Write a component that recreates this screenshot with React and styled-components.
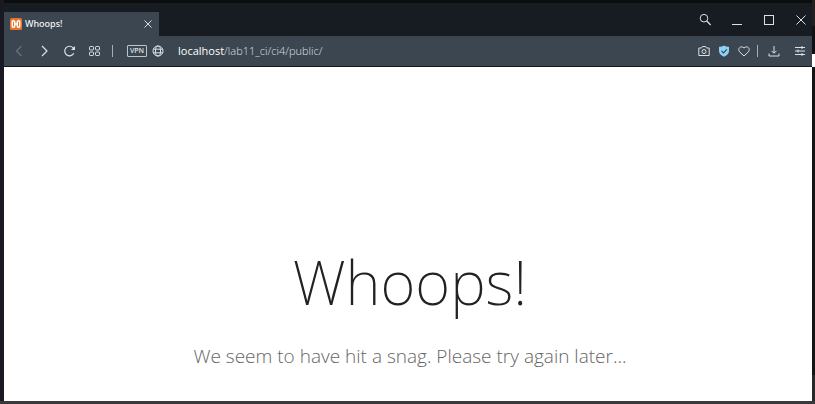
import React from 'react';
import styled, { createGlobalStyle } from 'styled-components';

const GlobalStyle = createGlobalStyle`
  * { box-sizing: border-box; }
  body { margin: 0; background: #16191f; font-family: "Open Sans", "Noto Sans", sans-serif; }
  button, input { font: inherit; color: inherit; border: 0; padding: 0; background: none; }
`;

const Desktop = styled.div`
  min-height: 100vh;
  display: grid;
  grid-template-columns: 4px minmax(0, 1fr) 3px;
  grid-template-rows: 1fr 3px;
  background: #16191f;
`;

const LeftEdge = styled.div`
  background: #181922;
`;

const RightEdge = styled.div`
  background: linear-gradient(#24201f 0 26px, #111114 26px 54px, #ffffff 54px 67px, #141415 67px 375px, #29292b 375px);
`;

const BottomEdge = styled.div`
  grid-column: 1 / -1;
  background: #39393b;
`;

const Browser = styled.div`
  display: flex;
  flex-direction: column;
`;

const TitleBar = styled.header`
  height: 36px;
  display: flex;
  align-items: flex-end;
  justify-content: space-between;
  background: #171b22;
  border-top: 3px solid #0c0d0f;
`;

const Tab = styled.div`
  width: 155px;
  height: 24px;
  padding: 0 4px 0 6px;
  display: flex;
  align-items: center;
  background: #3b4650;
  color: #f2f5f7;
  font-size: 9px;
  line-height: 14px;
`;

const TabTitle = styled.span`
  flex: 1;
  padding-left: 3px;
  font-family: "Noto Sans", sans-serif;
  font-weight: 500;
`;

const IconButton = styled.button`
  width: ${(p) => p.$width || 14}px;
  height: 14px;
  display: flex;
  align-items: center;
  justify-content: center;
  color: ${(p) => (p.$dim ? '#68737d' : '#dce1e5')};
  svg { display: block; flex: none; }
`;

const WindowControls = styled.div`
  height: 33px;
  display: flex;
  align-items: center;
  gap: 18px;
  padding-right: 4px;
`;

const Toolbar = styled.nav`
  height: 31px;
  display: flex;
  align-items: center;
  justify-content: space-between;
  padding: 0 2px 0 8px;
  background: #3b4650;
  border-bottom: 1px solid #14191e;
  color: #dce1e5;
`;

const NavGroup = styled.div`
  display: flex;
  align-items: center;
  gap: 11px;
`;

const Actions = styled.div`
  display: flex;
  align-items: center;
  gap: 6px;
`;

const Divider = styled.span`
  width: 1px;
  height: 12px;
  background: #a7afb6;
`;

const AddressBar = styled.div`
  flex: 1;
  display: flex;
  align-items: center;
  gap: 4px;
  padding-left: 14px;
`;

const VpnButton = styled.button`
  width: 20px;
  height: 12px;
  && { border: 1px solid #bcc3c9; }
  border-radius: 1px;
  display: flex;
  align-items: center;
  justify-content: center;
  font-size: 7px;
  line-height: 8px;
  font-weight: 600;
`;

const Address = styled.a`
  padding-left: 9px;
  font-size: 11px;
  line-height: 16px;
  font-weight: 300;
  color: #dce2e7;
  text-decoration: none;
`;

const Host = styled.span`
  font-weight: 500;
  color: #ffffff;
`;

const Page = styled.main`
  flex: 1;
  padding: 167px 0 28px 4px;
  background: #ffffff;
  text-align: center;
`;

const Title = styled.h1`
  margin: 0;
  font-family: "Noto Sans", sans-serif;
  font-size: 60px;
  line-height: 96px;
  font-weight: 250;
  color: #222222;
`;

const Message = styled.p`
  margin: 11px 0 0;
  font-size: 19px;
  line-height: 30px;
  font-weight: 300;
  color: #666666;
`;

const Icon = ({ size = 12, sw = 1, children }) => (
  <svg width={size} height={size} viewBox={`0 0 ${size} ${size}`} fill="none" stroke="currentColor" strokeWidth={sw} aria-hidden="true">
    {children}
  </svg>
);

const SiteLogo = () => (
  <svg width="12" height="12" viewBox="0 0 24 24" aria-hidden="true">
    <rect width="24" height="24" rx="3" fill="#e9742c" />
    <g fill="none" stroke="#fff" strokeWidth="3" strokeLinejoin="round">
      <path d="M8 5.500H6.500Q4.500 5.500 4.500 8V16Q4.500 18.500 7 18.500Q9.500 18.500 9.500 16V8Q9.500 5.500 7 5.500M16 5.500H17.500Q19.500 5.500 19.500 8V16Q19.500 18.500 17 18.500Q14.500 18.500 14.500 16V8Q14.500 5.500 17 5.500M9.500 12h5" />
    </g>
  </svg>
);

export default function App() {
  return (
    <Desktop>
      <GlobalStyle />
      <LeftEdge />
      <Browser>
        <TitleBar>
          <Tab>
            <SiteLogo />
            <TabTitle>Whoops!</TabTitle>
            <IconButton aria-label="Close tab"><Icon size={10}><path d="M1.500 1.500l7 7M8.500 1.500l-7 7" /></Icon></IconButton>
          </Tab>
          <WindowControls>
            <IconButton aria-label="Search tabs"><Icon><circle cx="5" cy="4.200" r="3.800" /><path d="M7.800 7L11.700 11" strokeWidth="1.300" /></Icon></IconButton>
            <IconButton aria-label="Minimize"><Icon size={10}><path d="M0 9.500h10" /></Icon></IconButton>
            <IconButton aria-label="Maximize"><Icon size={10}><rect x=".5" y=".5" width="9" height="9" /></Icon></IconButton>
            <IconButton aria-label="Close window"><Icon size={10}><path d="M.5.5l9 9M9.500.5l-9 9" /></Icon></IconButton>
          </WindowControls>
        </TitleBar>
        <Toolbar>
          <NavGroup>
            <IconButton $dim aria-label="Back"><Icon sw={1.2}><path d="M8.500 1L3.500 6l5 5" /></Icon></IconButton>
            <IconButton aria-label="Forward"><Icon sw={1.2}><path d="M4 1l5 5-5 5" /></Icon></IconButton>
            <IconButton aria-label="Reload"><Icon sw={1.2}><path d="M10.800 8.300A4.800 4.800 0 1 1 10.100 2.800L11 4" /><path d="M12 1v4H8z" fill="currentColor" stroke="none" /></Icon></IconButton>
            <IconButton aria-label="Speed dial"><Icon><rect x="1.500" y="1.500" width="4" height="3.500" rx=".8" /><rect x="7.500" y="1.500" width="4" height="3.500" rx=".8" /><rect x="1.500" y="7" width="4" height="3.500" rx=".8" /><rect x="7.500" y="7" width="4" height="3.500" rx=".8" /></Icon></IconButton>
            <Divider />
          </NavGroup>
          <AddressBar>
            <VpnButton>VPN</VpnButton>
            <IconButton aria-label="Site information"><Icon><circle cx="6" cy="6" r="5" /><ellipse cx="6" cy="6" rx="2.500" ry="5" /><path d="M1.300 4.200h9.400M1.300 7.800h9.400" /></Icon></IconButton>
            <Address href="#"><Host>localhost</Host>/lab11_ci/ci4/public/</Address>
          </AddressBar>
          <Actions>
            <IconButton aria-label="Snapshot"><Icon><path d="M.8 3h2.700l1-1.500h3l1 1.500h2.700v7.500H.8z" /><circle cx="6" cy="6.500" r="2" /></Icon></IconButton>
            <IconButton aria-label="Ad blocker"><Icon><path d="M1 1.800Q4 2 6 .5Q8 2 11 1.800V6Q11 9.500 6 11.700Q1 9.500 1 6z" fill="#8ed3f6" stroke="none" /><path d="M3.500 5.800l2 2 3.300-3.500" stroke="#334653" strokeWidth="1.200" /></Icon></IconButton>
            <IconButton aria-label="Bookmark"><Icon><path d="M6 11L1.600 6.800C-.8 4 2.500-.2 6 3C9.500-.2 12.800 4 10.400 6.800z" /></Icon></IconButton>
            <Divider />
            <IconButton $width={20} aria-label="Downloads"><Icon><path d="M6 1v7M3.500 5.800L6 8.300l2.500-2.500M1 8.500v2.500h10V8.500" /></Icon></IconButton>
            <IconButton $width={20} aria-label="Easy setup"><Icon><path d="M1 2.500h10M1 6h10M1 9.500h10M8 1v3M4 4.500v3M8 8v3" /></Icon></IconButton>
          </Actions>
        </Toolbar>
        <Page>
          <Title>Whoops!</Title>
          <Message>We seem to have hit a snag. Please try again later...</Message>
        </Page>
      </Browser>
      <RightEdge />
      <BottomEdge />
    </Desktop>
  );
}
